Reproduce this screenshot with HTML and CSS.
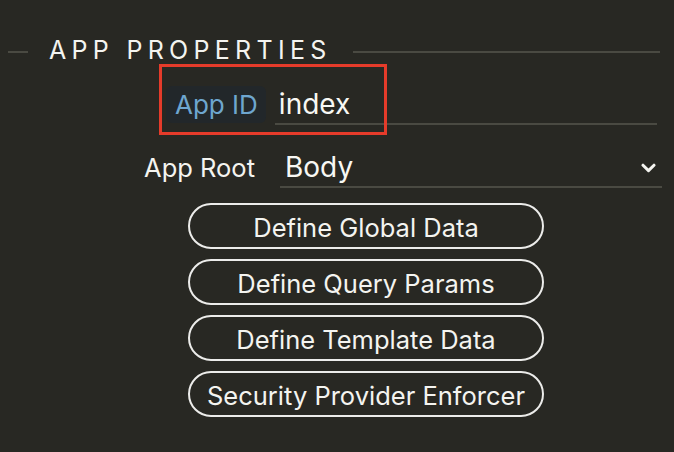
FILE: index.html
```html
<!DOCTYPE html>
<html lang="en">
<head>
<meta charset="utf-8">
<title>App Properties</title>
<link rel="stylesheet" href="styles.css">
</head>
<body>
<div class="panel">
  <div class="section-head">
    <span class="rule rule-short"></span>
    <h2 class="section-title">APP PROPERTIES</h2>
    <span class="rule rule-long"></span>
  </div>

  <div class="row row-id">
    <span class="badge">App ID</span>
    <div class="field field-id"><span class="value value-id">index</span></div>
    <div class="highlight"></div>
  </div>

  <div class="row row-root">
    <span class="label">App Root</span>
    <div class="field field-select">
      <span class="value value-root">Body</span>
      <svg class="chevron" width="15" height="10" viewBox="0 0 15 10" aria-hidden="true">
        <path d="M2 2.2 L7.5 7.6 L13 2.2" fill="none" stroke="#f4f4f0" stroke-width="3" stroke-linecap="round" stroke-linejoin="round"/>
      </svg>
    </div>
  </div>

  <div class="actions">
    <button class="btn">Define Global Data</button>
    <button class="btn">Define Query Params</button>
    <button class="btn">Define Template Data</button>
    <button class="btn">Security Provider Enforcer</button>
  </div>
</div>
</body>
</html>
```

FILE: styles.css
```css
html, body {
  margin: 0;
  padding: 0;
  background: #282823;
}

body {
  width: 674px;
  height: 452px;
  overflow: hidden;
  font-family: Inter, "Liberation Sans", sans-serif;
  color: #f4f4f0;
}

.panel {
  padding: 35px 0 0 8px;
}

.section-head {
  display: flex;
  align-items: flex-start;
  height: 30px;
  margin-right: 14px;
}

.rule {
  display: block;
  height: 2px;
  margin-top: 16px;
  background: #4a4a42;
}

.rule-short {
  width: 20px;
  margin-right: 21px;
}

.rule-long {
  flex: 1;
  margin-left: 21px;
}

.section-title {
  margin: 0;
  font-size: 25px;
  line-height: 30px;
  font-weight: 400;
  letter-spacing: 5.3px;
  color: #f4f4f0;
}

.row {
  display: flex;
}

.row-id {
  position: relative;
  margin-top: 21px;
  padding-left: 158px;
  align-items: flex-start;
  height: 39px;
}

.badge {
  display: block;
  height: 37px;
  padding: 0 8px 0 9px;
  border-radius: 6px;
  background: #22272a;
  color: #6ea6cf;
  font-size: 26px;
  line-height: 37px;
}

.field {
  box-sizing: border-box;
  border-bottom: 2px solid #4a4a42;
}

.field-id {
  width: 382px;
  height: 39px;
  margin-left: 9px;
  padding: 1px 0 0 4px;
}

.value {
  display: block;
  font-size: 28px;
  line-height: 34px;
  color: #f8f8f4;
}

.highlight {
  position: absolute;
  left: 151px;
  top: -22px;
  width: 228px;
  height: 71px;
  box-sizing: border-box;
  border: 3px solid #e53b2a;
  pointer-events: none;
}

.row-root {
  margin-top: 25px;
  align-items: baseline;
}

.label {
  width: 247px;
  text-align: right;
  font-size: 25.5px;
  color: #f4f4f0;
}

.field-select {
  display: flex;
  align-items: flex-start;
  width: 382px;
  height: 38px;
  margin-left: 25px;
  padding-left: 5px;
}

.chevron {
  margin-left: auto;
  margin-right: 6px;
  align-self: center;
}

.actions {
  display: flex;
  flex-direction: column;
  gap: 10px;
  width: 356px;
  margin: 15px 0 0 180px;
}

.btn {
  box-sizing: border-box;
  height: 46px;
  border: 2px solid #ececea;
  border-radius: 23px;
  background: transparent;
  color: #f4f4f0;
  font-family: Inter, "Liberation Sans", sans-serif;
  font-size: 25.5px;
  line-height: 42px;
  padding: 2px 0 0;
  text-align: center;
}
```
